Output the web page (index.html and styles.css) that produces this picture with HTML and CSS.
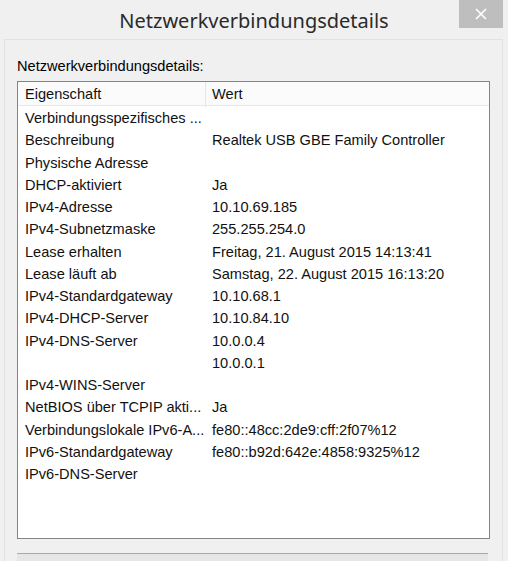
FILE: index.html
```html
<!DOCTYPE html>
<html lang="de">
<head>
<meta charset="utf-8">
<title>Netzwerkverbindungsdetails</title>
<link rel="stylesheet" href="styles.css">
</head>
<body>
<div class="window">
  <div class="titlebar">
    <span class="title">Netzwerkverbindungsdetails</span>
    <div class="close" aria-label="Schließen">
      <svg width="12" height="12" viewBox="0 0 12 12"><path d="M1 1 L11 11 M11 1 L1 11" stroke="#fff" stroke-width="1.6" fill="none"/></svg>
    </div>
  </div>
  <div class="panel">
    <div class="label">Netzwerkverbindungsdetails:</div>
    <div class="listbox">
      <div class="row head"><div class="c1">Eigenschaft</div><div class="c2">Wert</div></div>
      <div class="row"><div class="c1">Verbindungsspezifisches ...</div><div class="c2"></div></div>
      <div class="row"><div class="c1">Beschreibung</div><div class="c2">Realtek USB GBE Family Controller</div></div>
      <div class="row"><div class="c1">Physische Adresse</div><div class="c2"></div></div>
      <div class="row"><div class="c1">DHCP-aktiviert</div><div class="c2">Ja</div></div>
      <div class="row"><div class="c1">IPv4-Adresse</div><div class="c2">10.10.69.185</div></div>
      <div class="row"><div class="c1">IPv4-Subnetzmaske</div><div class="c2">255.255.254.0</div></div>
      <div class="row"><div class="c1">Lease erhalten</div><div class="c2">Freitag, 21. August 2015 14:13:41</div></div>
      <div class="row"><div class="c1">Lease läuft ab</div><div class="c2">Samstag, 22. August 2015 16:13:20</div></div>
      <div class="row"><div class="c1">IPv4-Standardgateway</div><div class="c2">10.10.68.1</div></div>
      <div class="row"><div class="c1">IPv4-DHCP-Server</div><div class="c2">10.10.84.10</div></div>
      <div class="row"><div class="c1">IPv4-DNS-Server</div><div class="c2">10.0.0.4</div></div>
      <div class="row"><div class="c1"></div><div class="c2">10.0.0.1</div></div>
      <div class="row"><div class="c1">IPv4-WINS-Server</div><div class="c2"></div></div>
      <div class="row"><div class="c1">NetBIOS über TCPIP akti...</div><div class="c2">Ja</div></div>
      <div class="row"><div class="c1">Verbindungslokale IPv6-A...</div><div class="c2">fe80::48cc:2de9:cff:2f07%12</div></div>
      <div class="row"><div class="c1">IPv6-Standardgateway</div><div class="c2">fe80::b92d:642e:4858:9325%12</div></div>
      <div class="row"><div class="c1">IPv6-DNS-Server</div><div class="c2"></div></div>
    </div>
    <div class="button-edge"></div>
  </div>
</div>
</body>
</html>
```

FILE: styles.css
```css
* { box-sizing: border-box; }
html, body { margin: 0; padding: 0; }
body {
  background: #f0f0f0;
  width: 508px;
  height: 561px;
  overflow: hidden;
  font-family: "Liberation Sans", Arial, sans-serif;
  color: #111;
}
.window {
  position: relative;
  height: 561px;
}
.titlebar {
  height: 39px;
  display: flex;
  align-items: center;
  justify-content: center;
}
.title {
  font-family: "Noto Sans", "Open Sans", sans-serif;
  font-size: 20px;
  color: #2a2a2a;
  margin-top: 2px;
}
.close {
  position: absolute;
  top: 0;
  right: 5px;
  width: 44px;
  height: 28px;
  background: #bebebe;
  display: flex;
  align-items: center;
  justify-content: center;
}
.panel {
  margin: 0 5px 0 4px;
  height: 522px;
  border-top: 1px solid #e2e2e2;
  border-left: 1px solid #e2e2e2;
  border-right: 1px solid #e2e2e2;
  padding: 17px 0 0 12px;
}
.label {
  font-size: 14.6px;
  line-height: 19px;
  color: #000;
  margin-bottom: 5px;
}
.listbox {
  width: 473px;
  height: 458px;
  background: #fff;
  border: 1px solid #848484;
}
.row {
  display: grid;
  grid-template-columns: 188px 1fr;
  height: 22.25px;
  line-height: 25px;
  font-size: 14.6px;
  color: #111;
  white-space: nowrap;
}
.row .c1 { padding-left: 7px; }
.row .c2 { padding-left: 6px; }
.row.head {
  height: 24px;
  line-height: 25px;
  background: #fbfbfb;
  border-bottom: 1px solid #e8e8e8;
}
.row.head .c1 { border-right: 1px solid #e5e5e5; }
.button-edge {
  width: 471px;
  height: 10px;
  margin-top: 14px;
  border-top: 1px solid #a9a9a9;
  background: #e6e6e6;
}
```
